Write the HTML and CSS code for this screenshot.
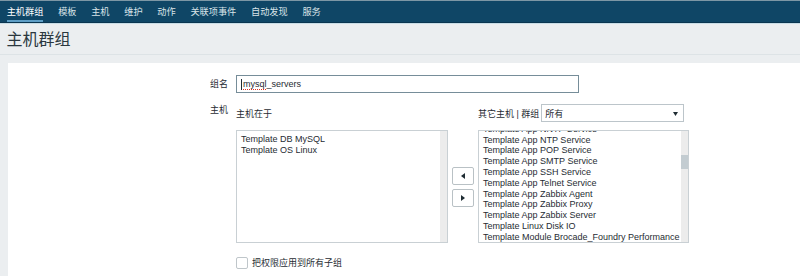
FILE: index.html
```html
<!DOCTYPE html>
<html lang="zh">
<head>
<meta charset="utf-8">
<title>主机群组</title>
<link rel="stylesheet" href="styles.css">
</head>
<body>
<nav class="topnav">
  <a class="nav-item active">主机群组</a>
  <a class="nav-item">模板</a>
  <a class="nav-item">主机</a>
  <a class="nav-item">维护</a>
  <a class="nav-item">动作</a>
  <a class="nav-item">关联项事件</a>
  <a class="nav-item">自动发现</a>
  <a class="nav-item">服务</a>
</nav>
<header class="page-header"><h1 class="page-title">主机群组</h1></header>
<main class="panel">
  <form class="form">
    <div class="form-row row-name">
      <label class="form-label">组名</label>
      <div class="form-field">
        <div class="text-input"><span class="caret"></span><span class="misspelled">mysql</span>_servers</div>
      </div>
    </div>
    <div class="form-row row-hosts">
      <label class="form-label label-top">主机</label>
      <div class="form-field">
        <div class="twin">
          <div class="twin-col col-left">
            <div class="twin-head">主机在于</div>
            <div class="listbox">
              <div class="list list-left">
                <div class="opt">Template DB MySQL</div>
                <div class="opt">Template OS Linux</div>
              </div>
              <div class="scrolltrack"></div>
            </div>
          </div>
          <div class="twin-buttons">
            <button type="button" class="move-btn"><svg width="4" height="6" viewBox="0 0 4 6"><polygon points="4,0 4,6 0,3" fill="#1f2c33"/></svg></button>
            <button type="button" class="move-btn"><svg width="4" height="6" viewBox="0 0 4 6"><polygon points="0,0 0,6 4,3" fill="#1f2c33"/></svg></button>
          </div>
          <div class="twin-col col-right">
            <div class="twin-head head-right">
              <span class="head-text">其它主机 | 群组</span>
              <div class="select"><span>所有</span><svg width="5" height="4" viewBox="0 0 5 4"><polygon points="0,0 5,0 2.5,4" fill="#1f2c33"/></svg></div>
            </div>
            <div class="listbox">
              <div class="list list-right">
                <div class="opt">Template App NNTP Service</div>
                <div class="opt">Template App NTP Service</div>
                <div class="opt">Template App POP Service</div>
                <div class="opt">Template App SMTP Service</div>
                <div class="opt">Template App SSH Service</div>
                <div class="opt">Template App Telnet Service</div>
                <div class="opt">Template App Zabbix Agent</div>
                <div class="opt">Template App Zabbix Proxy</div>
                <div class="opt">Template App Zabbix Server</div>
                <div class="opt">Template Linux Disk IO</div>
                <div class="opt">Template Module Brocade_Foundry Performance</div>
              </div>
              <div class="scrolltrack"><div class="thumb"></div></div>
            </div>
          </div>
        </div>
      </div>
    </div>
    <div class="form-row row-check">
      <span class="form-label"></span>
      <div class="form-field">
        <label class="checkbox"><span class="box"></span><span>把权限应用到所有子组</span></label>
      </div>
    </div>
  </form>
</main>
</body>
</html>
```
FILE: styles.css
```css
* { box-sizing: border-box; }
html, body { margin: 0; padding: 0; }
body {
  background: #ebeef0;
  font-family: "Liberation Sans", "Noto Sans CJK SC", sans-serif;
  color: #1f2c33;
  overflow: hidden;
}

/* top navigation */
.topnav {
  display: flex;
  gap: 14.7px;
  height: 23px;
  padding-left: 6.7px;
  background: #0f4666;
  border-top: 1px solid #7d97a5;
  border-bottom: 1px solid #0a3550;
}
.nav-item {
  font-size: 9.2px;
  line-height: 15px;
  padding-top: 4px;
  height: 21px;
  color: #d9e3e8;
  border-bottom: 2px solid transparent;
  white-space: nowrap;
}
.nav-item.active {
  color: #ffffff;
  border-bottom-color: #5d9ec6;
}

/* page header */
.page-header {
  border-top: 1px solid #c8dde6;
  border-bottom: 1px solid #dde3e6;
  padding: 2px 0 0 6.5px;
  height: 32px;
}
.page-title {
  margin: 0;
  font-size: 16px;
  line-height: 28px;
  font-weight: normal;
  color: #2a373e;
}

/* panel */
.panel {
  margin: 8px 0 0 8px;
  background: #ffffff;
  padding-top: 12px;
  height: 213px;
}
.form-row {
  display: grid;
  grid-template-columns: 220px 1fr;
  column-gap: 8px;
}
.form-label {
  text-align: right;
  font-size: 9px;
  line-height: 18px;
  color: #1f2c33;
}
.label-top { line-height: 12px; }
.row-hosts { margin-top: 11px; }
.row-check { margin-top: 14px; }

.text-input {
  width: 343px;
  height: 18px;
  border: 1px solid #768d99;
  padding-left: 4px;
  font-size: 9px;
  line-height: 16px;
  color: #1f2c33;
  display: flex;
  align-items: center;
  white-space: pre;
}
.caret {
  width: 1px;
  height: 11px;
  background: #1f2c33;
  margin-right: 1px;
}
.misspelled {
  text-decoration: underline dotted #e0301e;
  text-decoration-thickness: 1px;
  text-underline-offset: 2px;
}

/* twin box */
.twin {
  display: flex;
  gap: 4px;
  align-items: flex-end;
}
.col-left { width: 212px; }
.col-right { width: 211px; }
.twin-head {
  height: 18px;
  margin-bottom: 8px;
  font-size: 9px;
  line-height: 16px;
  padding-top: 2px;
  white-space: nowrap;
}
.head-right {
  display: flex;
  align-items: center;
  gap: 2px;
  padding-top: 0;
}
.head-text { line-height: 16px; padding-top: 2px; }
.select {
  width: 143px;
  height: 18px;
  border: 1px solid #bcc5ca;
  display: flex;
  align-items: center;
  justify-content: space-between;
  padding: 1px 5px 0 3px;
  font-size: 9px;
  background: #ffffff;
}
.listbox {
  position: relative;
  height: 113px;
  border: 1px solid #c9d0d4;
  overflow: hidden;
  background: #ffffff;
}
.list {
  font-size: 9px;
  line-height: 10.8px;
  padding-left: 4px;
  color: #1f2c33;
  white-space: nowrap;
}
.list-left { padding-top: 3px; }
.list-right { margin-top: -7.2px; }
.scrolltrack {
  position: absolute;
  top: 0;
  right: 0;
  bottom: 0;
  width: 7px;
  background: #ececec;
}
.thumb {
  position: absolute;
  left: 0;
  right: 0;
  top: 24px;
  height: 14px;
  background: #c3ccd1;
}
.twin-buttons {
  height: 113px;
  display: flex;
  flex-direction: column;
  justify-content: center;
  gap: 4px;
}
.move-btn {
  width: 22px;
  height: 18px;
  padding: 0;
  border: 1px solid #b9c1c5;
  border-radius: 2px;
  background: #ffffff;
  display: flex;
  align-items: center;
  justify-content: center;
}

/* checkbox */
.checkbox {
  display: flex;
  align-items: center;
  gap: 4px;
  font-size: 9px;
  line-height: 12px;
  color: #1f2c33;
}
.box {
  width: 12px;
  height: 12px;
  border: 1px solid #bfc6ca;
  border-radius: 2px;
  background: #ffffff;
}
```
